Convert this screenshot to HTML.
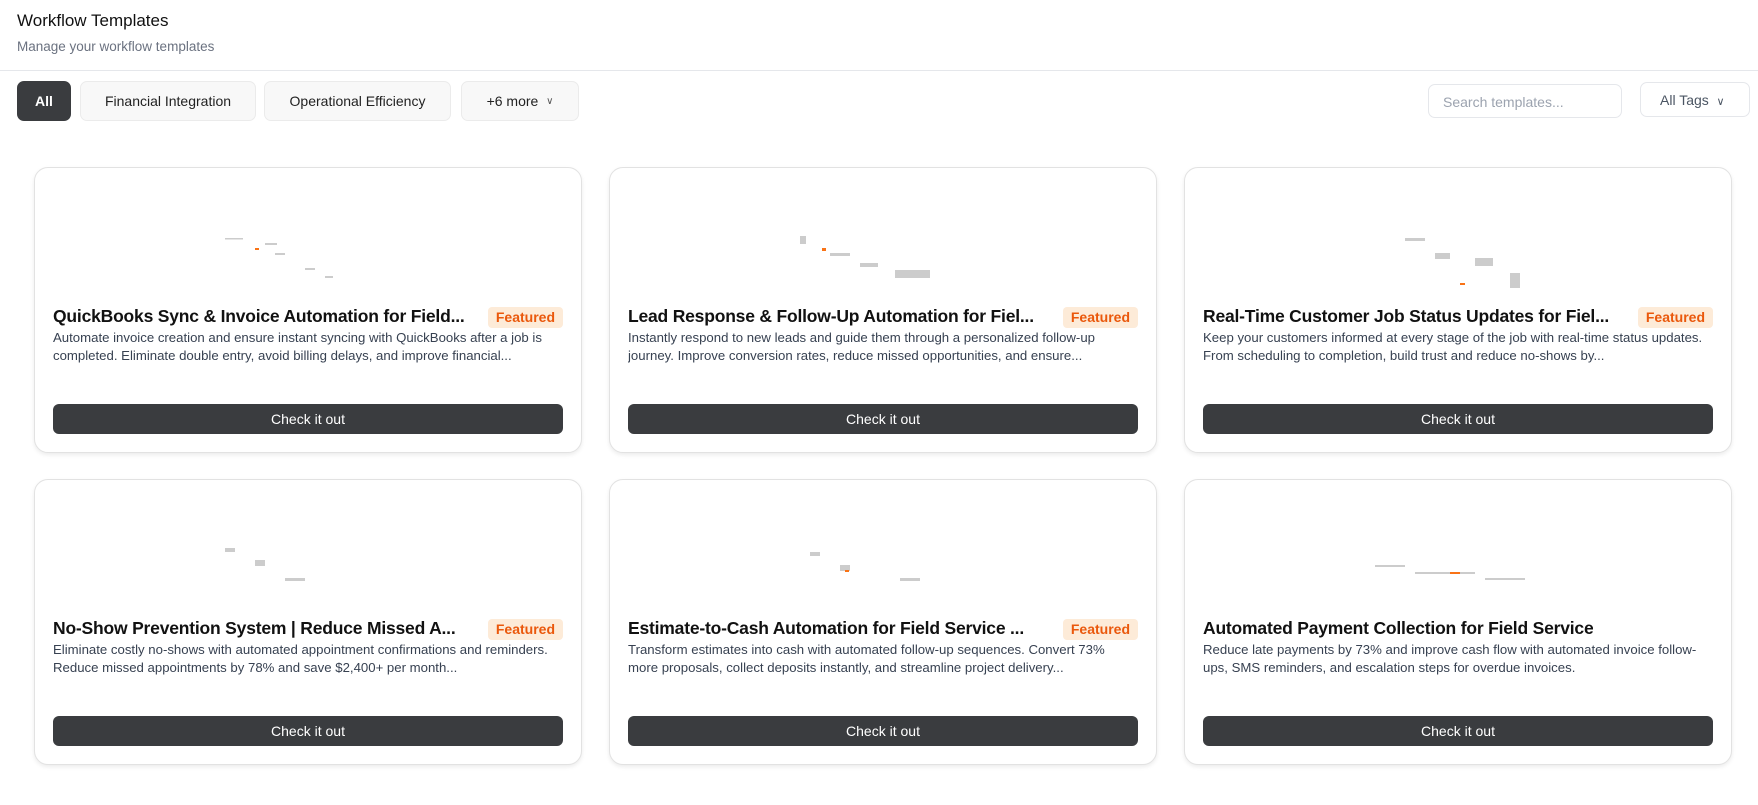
<!DOCTYPE html>
<html><head><meta charset="utf-8"><style>
*{box-sizing:border-box;margin:0;padding:0}
body{width:1758px;height:805px;background:#fff;font-family:"Liberation Sans",sans-serif;color:#111;position:relative;overflow:hidden}
.abs{position:absolute}
h1{position:absolute;left:17px;top:11px;font-size:17px;font-weight:normal;color:#111}
.sub{position:absolute;left:17px;top:39px;font-size:13.5px;color:#6b7280}
.sep{position:absolute;left:0;right:0;top:70px;height:1px;background:#e5e7eb}
.chip{position:absolute;top:81px;height:40px;border:1px solid #ebebeb;background:#f8f8f8;border-radius:7px;font-size:14px;color:#222;display:flex;align-items:center;justify-content:center}
.card{position:absolute;width:548px;height:286px;border:1px solid #e2e2e2;border-radius:14px;box-shadow:0 2px 4px rgba(0,0,0,.08);background:#fff}
.card .t{position:absolute;left:18px;top:138px;font-size:17.5px;font-weight:bold;color:#111;white-space:nowrap;max-width:430px;overflow:hidden;text-overflow:ellipsis;letter-spacing:-0.2px}
.card .b{position:absolute;right:18px;top:139px;height:21px;padding:0 8px;background:#fdebd8;color:#ea580c;border-radius:4px;font-size:14px;line-height:21px;font-weight:bold}
.card .d{position:absolute;left:18px;top:161px;width:505px;font-size:13.2px;line-height:18px;color:#374151;height:36px;overflow:hidden}
.card .btn{position:absolute;left:18px;right:18px;top:236px;height:30px;background:#3a3c3f;border-radius:6px;color:#fff;font-size:14px;text-align:center;line-height:30px}
.card svg{position:absolute;left:190px;top:30px}
</style></head><body>
<h1>Workflow Templates</h1>
<div class="sub">Manage your workflow templates</div>
<div class="sep"></div>
<div class="chip" style="left:17px;width:54px;background:#3a3c3f;border-color:#3a3c3f;color:#fff;font-weight:bold">All</div>
<div class="chip" style="left:80px;width:176px">Financial Integration</div>
<div class="chip" style="left:264px;width:187px">Operational Efficiency</div>
<div class="chip" style="left:461px;width:118px">+6 more&nbsp;&nbsp;<span style="font-size:10px;color:#555">&#8744;</span></div>
<div class="abs" style="left:1428px;top:84px;width:194px;height:34px;border:1px solid #e5e7eb;border-radius:7px;font-size:14px;color:#9ca3af;padding:9px 14px">Search templates...</div>
<div class="abs" style="left:1640px;top:82px;width:110px;height:35px;border:1px solid #e5e7eb;border-radius:7px;font-size:14px;color:#4b5563;padding:9px 19px">All Tags&nbsp;&nbsp;<span style="font-size:11px">&#8744;</span></div>

<div class="card" style="left:34px;top:167px">
<svg width="160" height="80"><g fill="#ccc"><rect x="0" y="40" width="18" height="1.5"/><rect x="40" y="45" width="12" height="2"/><rect x="50" y="55" width="10" height="2"/><rect x="80" y="70" width="10" height="2"/><rect x="100" y="78" width="8" height="2"/></g><rect x="30" y="50" width="4" height="2" fill="#f97316"/></svg>
<div class="t">QuickBooks Sync &amp; Invoice Automation for Field...</div><div class="b">Featured</div>
<div class="d">Automate invoice creation and ensure instant syncing with QuickBooks after a job is completed. Eliminate double entry, avoid billing delays, and improve financial...</div>
<div class="btn">Check it out</div></div>

<div class="card" style="left:609px;top:167px">
<svg width="180" height="80"><g fill="#ccc"><rect x="0" y="38" width="6" height="8"/><rect x="30" y="55" width="20" height="3"/><rect x="60" y="65" width="18" height="4"/><rect x="95" y="72" width="35" height="10"/></g><rect x="22" y="50" width="4" height="3" fill="#f97316"/></svg>
<div class="t">Lead Response &amp; Follow-Up Automation for Fiel...</div><div class="b">Featured</div>
<div class="d">Instantly respond to new leads and guide them through a personalized follow-up journey. Improve conversion rates, reduce missed opportunities, and ensure...</div>
<div class="btn">Check it out</div></div>

<div class="card" style="left:1184px;top:167px">
<svg width="200" height="100"><g fill="#ccc"><rect x="30" y="40" width="20" height="3"/><rect x="60" y="55" width="15" height="6"/><rect x="100" y="60" width="18" height="8"/><rect x="135" y="75" width="10" height="15"/></g><rect x="85" y="85" width="5" height="2" fill="#f97316"/></svg>
<div class="t">Real-Time Customer Job Status Updates for Fiel...</div><div class="b">Featured</div>
<div class="d">Keep your customers informed at every stage of the job with real-time status updates. From scheduling to completion, build trust and reduce no-shows by...</div>
<div class="btn">Check it out</div></div>

<div class="card" style="left:34px;top:479px">
<svg width="160" height="80"><g fill="#ccc"><rect x="0" y="38" width="10" height="4"/><rect x="30" y="50" width="10" height="6"/><rect x="60" y="68" width="20" height="3"/><rect x="110" y="80" width="10" height="2"/></g></svg>
<div class="t">No-Show Prevention System | Reduce Missed A...</div><div class="b">Featured</div>
<div class="d">Eliminate costly no-shows with automated appointment confirmations and reminders. Reduce missed appointments by 78% and save $2,400+ per month...</div>
<div class="btn">Check it out</div></div>

<div class="card" style="left:609px;top:479px">
<svg width="180" height="80"><g fill="#ccc"><rect x="10" y="42" width="10" height="4"/><rect x="40" y="55" width="10" height="6"/><rect x="100" y="68" width="20" height="3"/><rect x="130" y="86" width="10" height="3"/></g><rect x="45" y="60" width="4" height="2" fill="#f97316"/></svg>
<div class="t">Estimate-to-Cash Automation for Field Service ...</div><div class="b">Featured</div>
<div class="d">Transform estimates into cash with automated follow-up sequences. Convert 73% more proposals, collect deposits instantly, and streamline project delivery...</div>
<div class="btn">Check it out</div></div>

<div class="card" style="left:1184px;top:479px">
<svg width="200" height="80"><g fill="#ccc"><rect x="0" y="55" width="30" height="2"/><rect x="40" y="62" width="60" height="2"/><rect x="110" y="68" width="40" height="2"/></g><rect x="75" y="62" width="10" height="2" fill="#f97316"/></svg>
<div class="t">Automated Payment Collection for Field Service</div>
<div class="d">Reduce late payments by 73% and improve cash flow with automated invoice follow-ups, SMS reminders, and escalation steps for overdue invoices.</div>
<div class="btn">Check it out</div></div>
</body></html>
